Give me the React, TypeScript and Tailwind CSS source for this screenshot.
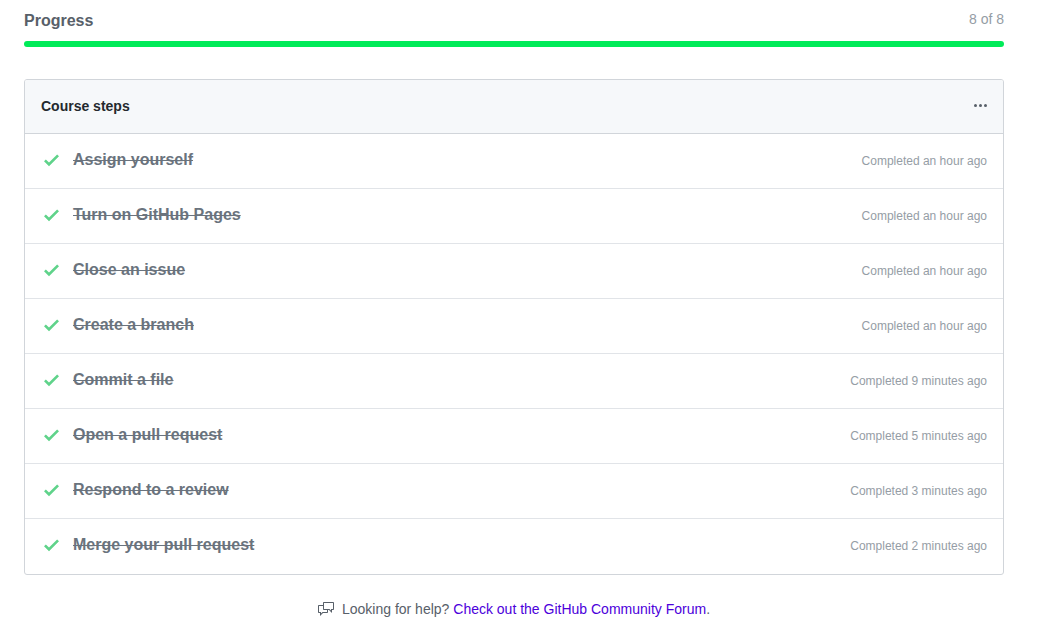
const steps = [
  { title: "Assign yourself", done: "an hour ago" },
  { title: "Turn on GitHub Pages", done: "an hour ago" },
  { title: "Close an issue", done: "an hour ago" },
  { title: "Create a branch", done: "an hour ago" },
  { title: "Commit a file", done: "9 minutes ago" },
  { title: "Open a pull request", done: "5 minutes ago" },
  { title: "Respond to a review", done: "3 minutes ago" },
  { title: "Merge your pull request", done: "2 minutes ago" },
];

function CheckIcon() {
  return (
    <svg width="15" height="20" viewBox="0 0 12 16" fill="currentColor" className="shrink-0 text-[#5fd38a]" aria-hidden="true">
      <path d="M12 5l-8 8-4-4 1.5-1.5L4 10l6.5-6.5L12 5z" />
    </svg>
  );
}

function KebabIcon() {
  return (
    <svg width="13" height="16" viewBox="0 0 13 16" fill="currentColor" aria-hidden="true">
      <path d="M1.5 9a1.5 1.5 0 100-3 1.5 1.5 0 000 3zm5 0a1.5 1.5 0 100-3 1.5 1.5 0 000 3zM13 7.5a1.5 1.5 0 11-3 0 1.5 1.5 0 013 0z" />
    </svg>
  );
}

function DiscussionIcon() {
  return (
    <svg width="16" height="16" viewBox="0 0 16 16" fill="currentColor" className="shrink-0" aria-hidden="true">
      <path
        fillRule="evenodd"
        d="M15 1H6c-.55 0-1 .45-1 1v2H1c-.55 0-1 .45-1 1v6c0 .55.45 1 1 1h1v3l3-3h4c.55 0 1-.45 1-1V9h1l3 3V9h1c.55 0 1-.45 1-1V2c0-.55-.45-1-1-1zM9 11H4.5L3 12.5V11H1V5h4v3c0 .55.45 1 1 1h3v2zm6-3h-2v1.5L11.5 8H6V2h9v6z"
      />
    </svg>
  );
}

export default function App() {
  return (
    <main className="bg-white pt-2 pr-9 pb-2 pl-6 font-['Liberation_Sans',Arial,sans-serif] text-[#586069]">
      <div className="flex items-start justify-between">
        <h2 className="text-base leading-[26px] font-bold">Progress</h2>
        <span className="text-sm leading-[22px] text-[#959da5]">8 of 8</span>
      </div>
      <div
        role="progressbar"
        aria-label="Progress"
        aria-valuemin={0}
        aria-valuemax={8}
        aria-valuenow={8}
        className="mt-[7px] h-1.5 overflow-hidden rounded-[3px] bg-[#e1e4e8]"
      >
        <div className="h-full w-full bg-[#00eb58]" />
      </div>

      <section className="mt-8 overflow-hidden rounded-[3px] border border-[#d1d5da]">
        <header className="flex items-start justify-between border-b border-[#d1d5da] bg-[#f6f8fa] px-4 pt-4 pb-[17px]">
          <h3 className="text-sm leading-5 font-bold text-[#24292e]">Course steps</h3>
          <button type="button" aria-label="Course options" className="flex h-5 items-center text-[#586069]">
            <KebabIcon />
          </button>
        </header>
        <ul>
          {steps.map((step) => (
            <li
              key={step.title}
              className="flex h-[55px] items-start gap-3.5 border-b border-[#e1e4e8] pt-4 pr-4 pl-[19px] last:border-b-0"
            >
              <CheckIcon />
              <h4 className="text-base leading-5 font-bold text-[#6a737d] line-through">{step.title}</h4>
              <span className="ml-auto text-xs leading-[22px] text-[#959da5]">Completed {step.done}</span>
            </li>
          ))}
        </ul>
      </section>

      <p className="mt-6 flex items-center justify-center gap-2 text-sm leading-5">
        <DiscussionIcon />
        <span>
          Looking for help?{" "}
          <a href="#forum" className="text-[#4c00db]">
            Check out the GitHub Community Forum
          </a>
          .
        </span>
      </p>
    </main>
  );
}
